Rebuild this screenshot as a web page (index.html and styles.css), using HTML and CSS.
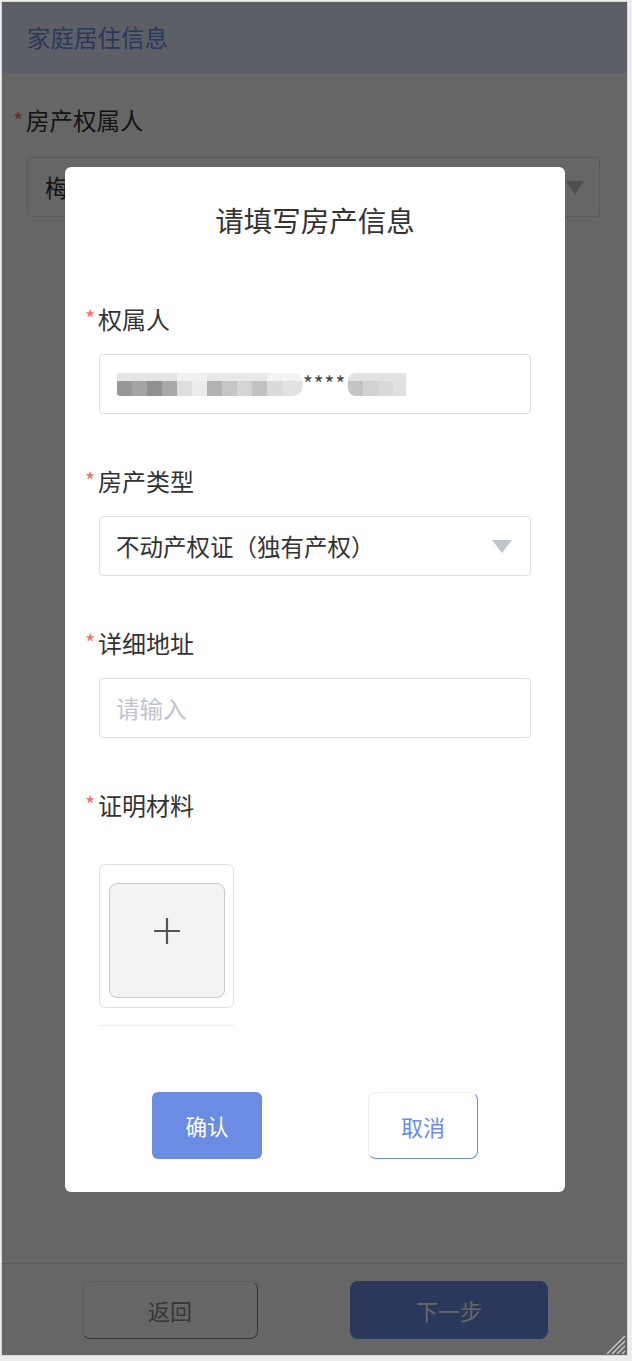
FILE: index.html
```html
<!DOCTYPE html>
<html lang="zh-CN">
<head>
    <meta charset="UTF-8">
    <meta name="viewport" content="width=device-width, initial-scale=1.0">
    <title>家庭居住信息</title>
    <link rel="stylesheet" href="styles.css">
</head>
<body>
    <div class="frame">
        <!-- 뒤에 깔린 원래 페이지 -->
        <div class="page">
            <div class="page-header">家庭居住信息</div>
            <div class="page-body">
                <div class="page-label"><span class="req">*</span>房产权属人</div>
                <div class="page-select">
                    <span>梅</span>
                    <svg class="arrow" width="18" height="13" viewBox="0 0 18 13"><polygon points="0,0 18,0 9,13" fill="#c0c4cc"/></svg>
                </div>
            </div>
            <div class="page-footer">
                <button class="btn-back">返回</button>
                <button class="btn-next">下一步</button>
            </div>
        </div>

        <div class="mask"></div>

        <!-- 팝업 -->
        <div class="dialog">
            <div class="dialog-title">请填写房产信息</div>
            <div class="form">
                <div class="form-item">
                    <div class="form-label"><span class="req">*</span>权属人</div>
                    <div class="control">
                        <span class="mosaic-a"></span><span class="stars">****</span><span class="mosaic-b"></span>
                    </div>
                </div>
                <div class="form-item">
                    <div class="form-label"><span class="req">*</span>房产类型</div>
                    <div class="control select">
                        <span>不动产权证（独有产权）</span>
                        <svg class="arrow" width="20" height="13" viewBox="0 0 20 13"><polygon points="0,0 20,0 10,13" fill="#c0c4cc"/></svg>
                    </div>
                </div>
                <div class="form-item">
                    <div class="form-label"><span class="req">*</span>详细地址</div>
                    <input class="control" type="text" placeholder="请输入">
                </div>
                <div class="form-item last">
                    <div class="form-label"><span class="req">*</span>证明材料</div>
                    <div class="upload">
                        <div class="upload-btn">
                            <svg width="28" height="28" viewBox="0 0 28 28"><path d="M14 1 V27 M1 14 H27" stroke="#555" stroke-width="2.2" fill="none"/></svg>
                        </div>
                    </div>
                    <div class="upload-line"></div>
                </div>
            </div>
            <div class="dialog-actions">
                <button class="btn-ok">确认</button>
                <button class="btn-cancel">取消</button>
            </div>
        </div>

        <svg class="grip" width="22" height="20" viewBox="0 0 22 20"><path d="M21 2 L3 20 M21 7 L8 20 M21 12 L13 20 M21 17 L18 20" stroke="#d4d4d4" stroke-width="1.2" fill="none"/></svg>
    </div>
</body>
</html>
```

FILE: styles.css
```css
* {
    margin: 0;
    padding: 0;
    box-sizing: border-box;
}

body {
    background-color: #ececec;
    font-family: "Noto Sans CJK SC", "Noto Sans", sans-serif;
    color: #333;
}

button, input {
    font-family: inherit;
}

.frame {
    position: relative;
    width: 627px;
    height: 1355px;
    margin: 1px 0 0 1px;
    border: 1px solid #d6d6d6;
    background-color: #fff;
    overflow: hidden;
}

.page {
    display: flex;
    flex-direction: column;
    height: 100%;
}

.page-header {
    height: 71px;
    padding: 17px 0 0 25px;
    background-color: #e6f0ff;
    color: #6a8ce3;
    font-size: 23.5px;
    line-height: 36px;
}

.page-body {
    flex: 1;
}

.req {
    width: 13px;
    margin-top: -3px;
    color: #f56c6c;
    font-size: 22px;
    line-height: 1;
}

.page-label {
    display: flex;
    align-items: center;
    height: 32px;
    margin-top: 31px;
    padding-left: 11px;
    font-size: 23.5px;
}

.page-select {
    display: flex;
    align-items: center;
    justify-content: space-between;
    width: 573px;
    height: 60px;
    margin: 21px 0 0 25px;
    padding: 0 15px 0 17px;
    border: 1px solid #dcdfe6;
    border-radius: 4px;
    font-size: 23.5px;
}

.page-footer {
    display: flex;
    justify-content: space-between;
    padding: 17px 79px 16px 80px;
    border-top: 1px solid #e4e7ed;
}

.btn-back {
    width: 176px;
    height: 58px;
    border: 1px solid #808080;
    border-top-color: rgba(128, 128, 128, 0.2);
    border-left-color: rgba(128, 128, 128, 0.2);
    border-radius: 8px;
    background-color: #fff;
    color: #8a8a8a;
    font-size: 22px;
}

.btn-next {
    width: 198px;
    height: 58px;
    border: none;
    border-radius: 8px;
    background-color: #6a8ce3;
    color: #fff;
    font-size: 22px;
}

.mask {
    position: absolute;
    inset: 0;
    background-color: rgba(0, 0, 0, 0.6);
}

.dialog {
    position: absolute;
    left: 63px;
    top: 165px;
    width: 500px;
    padding: 33px 0;
    border-radius: 6px;
    background-color: #fff;
}

.dialog-title {
    text-align: center;
    font-size: 28.5px;
    line-height: 40px;
}

.form {
    margin-top: 62px;
}

.form-item {
    margin-bottom: 50px;
    padding-left: 20px;
}

.form-item.last {
    margin-bottom: 0;
}

.form-label {
    display: flex;
    align-items: center;
    height: 32px;
    font-size: 24px;
}

.control {
    display: flex;
    align-items: center;
    width: 432px;
    height: 60px;
    margin: 20px 0 0 14px;
    padding: 0 18px 0 16px;
    border: 1px solid #dcdfe6;
    border-radius: 4px;
    background-color: #fff;
    color: #333;
    font-size: 23.5px;
    outline: none;
}

.control::placeholder {
    color: #c0c4cc;
}

.select {
    justify-content: space-between;
}

.mosaic-a {
    display: inline-block;
    width: 186px;
    height: 23px;
    margin-left: 1px;
    border-radius: 0 10px 10px 3px;
    background:
        linear-gradient(90deg, #e4e4e4 0 60px, #f1f1f1 60px 90px, #e8e8e8 90px 150px, #f3f3f3 150px 100%) top / 100% 8px no-repeat,
        linear-gradient(90deg, #979797 0 15px, #a4a4a4 15px 30px, #909090 30px 45px, #a9a9a9 45px 60px, #dedede 60px 75px, #ececec 75px 90px, #b2b2b2 90px 105px, #c6c6c6 105px 120px, #d4d4d4 120px 135px, #c2c2c2 135px 150px, #dadada 150px 165px, #e2e2e2 165px 100%) bottom / 100% 15px no-repeat;
}

.stars {
    margin-top: -2px;
    color: #444;
    font-size: 21px;
    letter-spacing: 1px;
}

.mosaic-b {
    display: inline-block;
    width: 58px;
    height: 23px;
    margin-left: 2px;
    border-radius: 8px 0 0 8px;
    background:
        linear-gradient(90deg, #e2e2e2 0 100%) top / 100% 8px no-repeat,
        linear-gradient(90deg, #c4c4c4 0 15px, #d2d2d2 15px 30px, #d9d9d9 30px 45px, #e0e0e0 45px 100%) bottom / 100% 15px no-repeat;
}

.upload {
    width: 135px;
    height: 144px;
    margin: 44px 0 0 14px;
    padding: 18px 8px 9px 9px;
    border: 1px solid #dcdfe6;
    border-radius: 6px;
}

.upload-btn {
    display: flex;
    justify-content: center;
    width: 116px;
    height: 115px;
    padding-top: 33px;
    border: 1px solid #c8c9cc;
    border-radius: 8px;
    background-color: #f2f3f5;
}

.upload-line {
    width: 135px;
    height: 1px;
    margin: 17px 0 0 14px;
    background-color: #ebedf0;
}

.dialog-actions {
    display: flex;
    justify-content: center;
    gap: 106px;
    margin-top: 66px;
}

.btn-ok {
    width: 110px;
    height: 67px;
    border: none;
    border-radius: 6px;
    background-color: #6a8ce3;
    color: #fff;
    font-size: 21.5px;
}

.btn-cancel {
    width: 110px;
    height: 67px;
    border: 1px solid #6a8ce3;
    border-top-color: rgba(106, 140, 227, 0.15);
    border-left-color: rgba(106, 140, 227, 0.15);
    border-radius: 8px;
    background-color: #fff;
    color: #6a8ce3;
    font-size: 22px;
}

.grip {
    position: absolute;
    right: 1px;
    bottom: 1px;
}
```
